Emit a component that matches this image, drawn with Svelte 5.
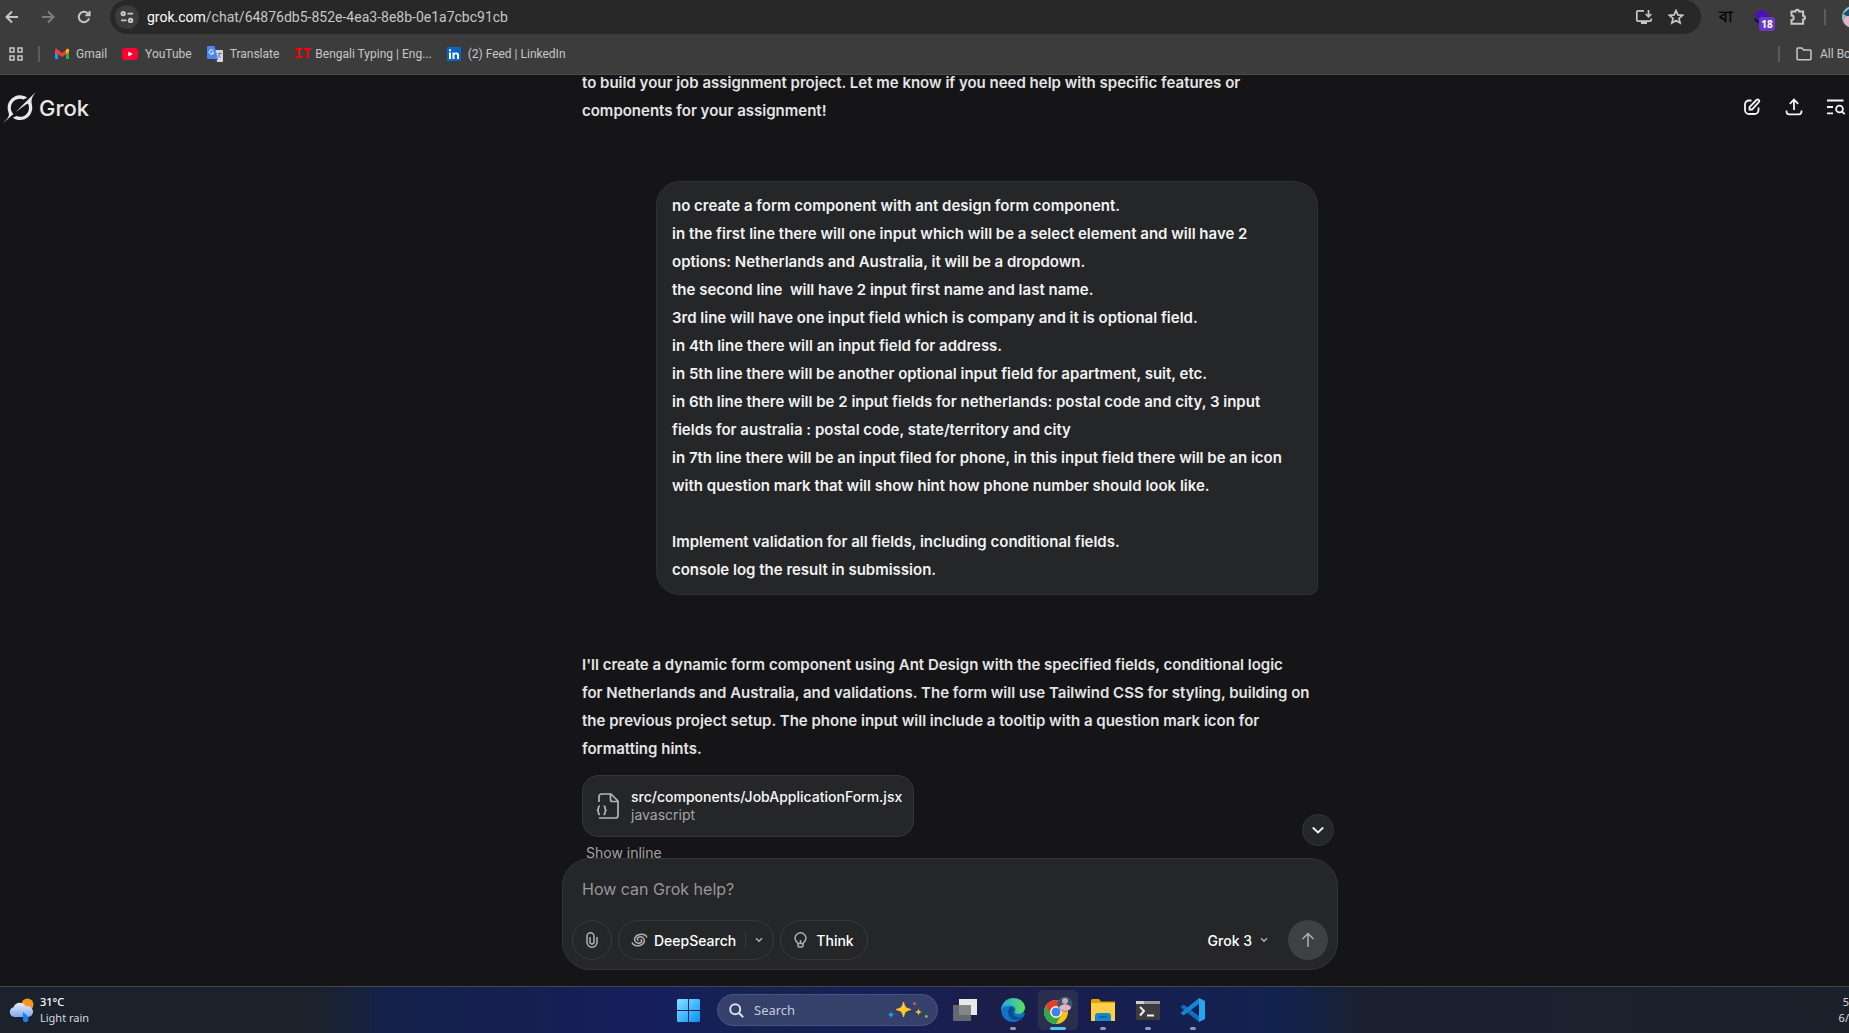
<script>
  const intro = [
    'to build your job assignment project. Let me know if you need help with specific features or',
    'components for your assignment!'
  ].join('\n');

  const request = [
    'no create a form component with ant design form component.',
    'in the first line there will one input which will be a select element and will have 2',
    'options: Netherlands and Australia, it will be a dropdown.',
    'the second line  will have 2 input first name and last name.',
    '3rd line will have one input field which is company and it is optional field.',
    'in 4th line there will an input field for address.',
    'in 5th line there will be another optional input field for apartment, suit, etc.',
    'in 6th line there will be 2 input fields for netherlands: postal code and city, 3 input',
    'fields for australia : postal code, state/territory and city',
    'in 7th line there will be an input filed for phone, in this input field there will be an icon',
    'with question mark that will show hint how phone number should look like.',
    '',
    'Implement validation for all fields, including conditional fields.',
    'console log the result in submission.'
  ].join('\n');

  const answer = [
    "I'll create a dynamic form component using Ant Design with the specified fields, conditional logic",
    'for Netherlands and Australia, and validations. The form will use Tailwind CSS for styling, building on',
    'the previous project setup. The phone input will include a tooltip with a question mark icon for',
    'formatting hints.'
  ].join('\n');

  let prompt = $state('');
</script>

<div class="screen">
  <header class="browser">
    <nav class="toolbar" aria-label="Browser toolbar">
      <div class="history">
        <button aria-label="Back"><svg width="14" height="14" viewBox="0 0 14 14"><path d="M13 7H2M7 1.5 1.5 7 7 12.5" /></svg></button>
        <button class="dim" aria-label="Forward"><svg width="14" height="14" viewBox="0 0 14 14"><path d="M1 7h11M7 1.5 12.5 7 7 12.5" /></svg></button>
        <button aria-label="Reload"><svg width="14" height="14" viewBox="0 0 14 14"><path d="M12 8.3A5.2 5.2 0 1 1 10.8 3.4L12.4 5M12.6 1v4.3H8.4" /></svg></button>
      </div>
      <div class="address">
        <button class="tune" aria-label="Site information">
          <svg width="14" height="14" viewBox="0 0 14 14"><circle cx="3.2" cy="3.6" r="1.7" /><path d="M7.5 3.6H13M1 10.4h5.5" /><circle cx="10.6" cy="10.4" r="1.7" /></svg>
        </button>
        <span class="url"><b>grok.com</b>/chat/64876db5-852e-4ea3-8e8b-0e1a7cbc91cb</span>
        <button aria-label="Install app"><svg width="18" height="16" viewBox="0 0 18 16"><path d="M9 1.8H3A1.2 1.2 0 0 0 1.8 3v8A1.2 1.2 0 0 0 3 12.2h12a1.2 1.2 0 0 0 1.2-1.2V9.5" /><path d="M13.5 1v6.5M10.7 5l2.8 2.8L16.3 5" /><path class="solid" d="M6 12h6v3H6z" /></svg></button>
        <button aria-label="Bookmark this tab"><svg width="16" height="16" viewBox="0 0 16 16"><path d="m8 1.6 1.9 4.3 4.7.4-3.6 3.1 1.1 4.6L8 11.5 3.9 14 5 9.4 1.4 6.3l4.7-.4z" /></svg></button>
      </div>
      <div class="extensions">
        <button class="bengali" lang="bn" aria-label="Bengali keyboard">বা</button>
        <button class="cap" aria-label="Extension with 18 items">
          <svg width="18" height="16" viewBox="0 0 18 16"><path d="m9 0 8 6-8 6-8-6z" /><path d="M1.5 8.5 9 13.5V16L1.5 12z" /></svg>
          <span class="badge">18</span>
        </button>
        <button aria-label="Extensions"><svg width="18" height="18" viewBox="0 0 18 18"><path d="M2.5 3.5h4a1.8 1.8 0 0 1 3.6 0h4v4.2a1.9 1.9 0 0 1 0 3.8v4.2H2.5v-3.8a2.2 2.2 0 0 0 0-4.4z" /></svg></button>
      </div>
      <span class="rule"></span>
      <button class="profile" aria-label="Profile">
        <svg width="22" height="22" viewBox="0 0 22 22"><circle cx="11" cy="11" r="11" /><path d="M1 8 7 3v8z" /><circle cx="7" cy="15" r="5" /></svg>
      </button>
    </nav>

    <nav class="bookmarks" aria-label="Bookmarks">
      <button class="apps" aria-label="Apps"><svg width="14" height="14" viewBox="0 0 14 14"><path d="M1 1h4v4H1zM9 1h4v4H9zM1 9h4v4H1zM9 9h4v4H9z" /></svg></button>
      <span class="rule"></span>
      <a href="#gmail"><svg width="14" height="12" viewBox="0 0 14 12"><path d="M0 2v9h3V5z" fill="#4285f4" /><path d="M14 2v9h-3V5z" fill="#34a853" /><path d="M0 1.5 1.5.5 7 5 12.5.5 14 1.5V4L7 9 0 4z" fill="#ea4335" /><path d="M11 2 12.5.5 14 1.5V4l-3 2z" fill="#fbbc04" /></svg>Gmail</a>
      <a href="#youtube"><svg width="16" height="12" viewBox="0 0 16 12"><rect width="16" height="12" rx="3" fill="#ff0033" /><path d="M6.3 3.4 10.8 6l-4.5 2.6z" fill="#fff" /></svg>YouTube</a>
      <a href="#translate"><svg width="16" height="16" viewBox="0 0 16 16"><path d="M7 4h8a1 1 0 0 1 1 1v10a1 1 0 0 1-1 1h-5z" fill="#d5d8dc" /><path d="M1 0h6.5L11 13H1a1 1 0 0 1-1-1V1a1 1 0 0 1 1-1z" fill="#4a86ee" /><path d="m8 13 3 0-2 3z" fill="#2a56c6" /><path d="M6.3 4.8a2.2 2.2 0 1 0 .3 1.9H4.5" fill="none" stroke="#fff" stroke-width="1" /><path d="M10.5 7.5H15M12.7 6.5v1c0 2-1 3-1.7 3.6m.3-2c.6 1.2 1.5 2 2.7 2.7" fill="none" stroke="#6b7885" stroke-width=".9" /></svg>Translate</a>
      <a href="#bengali-typing"><span class="it">IT</span>Bengali Typing | Eng...</a>
      <a href="#linkedin"><svg width="14" height="14" viewBox="0 0 14 14"><rect width="14" height="14" rx="1" fill="#0a66c2" /><path d="M2 5.5h2V12H2zM2 2.2h2v2H2zM5.5 5.5h1.9v.9c1-1.6 4.6-1.5 4.6 1.6v4h-2V8.6c0-2-2.5-1.8-2.5 0V12h-2z" fill="#fff" /></svg>(2) Feed | LinkedIn</a>
      <span class="push"></span>
      <span class="rule"></span>
      <button class="all"><svg width="16" height="14" viewBox="0 0 16 14"><path d="M1 11.8V2a.9.9 0 0 1 .9-.9h4l1.6 1.8h6.6a.9.9 0 0 1 .9.9v8a.9.9 0 0 1-.9.9H1.900a.9.9 0 0 1-.9-.9z" /></svg><span>All Bookmarks</span></button>
    </nav>
  </header>

  <main class="page">
    <a class="brand" href="#home">
      <svg width="33" height="33" viewBox="0 0 24 24"><path d="M9.27 15.29l7.978-5.897c.391-.29.95-.177 1.137.272.98 2.369.542 5.215-1.41 7.169-1.951 1.954-4.667 2.382-7.149 1.406l-2.711 1.257c3.889 2.661 8.611 2.003 11.562-.953 2.341-2.344 3.066-5.539 2.388-8.42l.006.007c-.983-4.232.242-5.924 2.75-9.383.06-.082.12-.164.179-.248l-3.301 3.305v-.01L9.267 15.292M7.623 16.723c-2.792-2.67-2.31-6.801.071-9.184 1.761-1.763 4.647-2.483 7.166-1.425l2.705-1.25a7.808 7.808 0 00-1.829-1A8.975 8.975 0 005.984 5.83c-2.533 2.536-3.33 6.436-1.962 9.764 1.022 2.487-.653 4.246-2.34 6.022-.599.63-1.199 1.259-1.682 1.925l7.62-6.815" /></svg>
      <span>Grok</span>
    </a>
    <div class="actions">
      <button aria-label="New chat"><svg width="18" height="18" viewBox="0 0 18 18"><path d="M8.5 2.5H6A4 4 0 0 0 2 6.5V12a4 4 0 0 0 4 4h5.5a4 4 0 0 0 4-4V9.5" /><path d="M6.5 11.5V9l7-7a1.5 1.5 0 0 1 2.3 2.2L9 11.5z" /></svg></button>
      <button aria-label="Share"><svg width="18" height="18" viewBox="0 0 18 18"><path d="M9 12V2M4.8 5.8 9 1.6l4.2 4.2M1.5 12.5v1a2.8 2.8 0 0 0 2.8 2.8h9.4a2.8 2.8 0 0 0 2.8-2.8v-1" /></svg></button>
      <button aria-label="Search history"><svg width="18" height="18" viewBox="0 0 18 18"><path d="M0 2.5h16.5M0 9h6M0 15.3h6" /><circle cx="12.5" cy="11" r="3.4" /><path d="m15 13.5 2.7 2.7" /></svg></button>
    </div>

    <section class="thread">
      <p>{intro}</p>
      <p class="bubble">{request}</p>
      <p>{answer}</p>
      <button class="file">
        <svg width="24" height="26" viewBox="0 0 24 26"><path d="M3 9V3.5A2.5 2.5 0 0 1 5.5 1H15l7 7v14.5a2.5 2.5 0 0 1-2.5 2.5H3M14.5 1v5.5A2 2 0 0 0 16.5 8.5H22" /><path d="M4 13c-1.5 0-1.5.5-1.5 2s0 2-1.5 2.2c1.5.2 1.5.8 1.5 2.2s0 2 1.5 2M7.5 13C9 13 9 13.5 9 15s0 2 1.5 2.2C9 17.4 9 18 9 19.4s0 2-1.5 2" /></svg>
        <span><strong>src/components/JobApplicationForm.jsx</strong><small>javascript</small></span>
      </button>
      <button class="inline">Show inline</button>
    </section>

    <form class="composer" onsubmit={(event) => event.preventDefault()}>
      <button type="button" class="latest" aria-label="Scroll to latest"><svg width="14" height="14" viewBox="0 0 14 14"><path d="m1.8 4.5 5.2 5 5.2-5" /></svg></button>
      <input type="text" aria-label="Message" placeholder="How can Grok help?" bind:value={prompt} />
      <div class="controls">
        <button type="button" class="pill round" aria-label="Attach"><svg width="12" height="16" viewBox="0 0 12 16"><path d="M8.500 5v5a2.500 2.500 0 0 1-5 0V3.500a2.700 2.700 0 0 1 5.400 0M11 5.500V10a5 5 0 0 1-10 0V5.500" stroke="none" /><path d="M11 5v5.200a4.800 4.800 0 0 1-10 0V4.200a3.500 3.500 0 0 1 7 0v5.900a2 2 0 0 1-4 0V5" /></svg></button>
        <div class="pill split">
          <button type="button"><svg width="17" height="14" viewBox="0 0 17 14"><path d="M1 9.5C2 12.5 6 13.5 9.5 12.3 13 11 14 8 13 6 12 4 9.5 3.5 7.5 4.3 5.7 5 6 7 7.5 7.5" /><path d="M16 4.5C15 1.5 11 .5 7.5 1.7 4 3 3 6 4 8c1 2 3.5 2.5 5.5 1.7C11.3 9 11 7 9.5 6.5" /></svg>DeepSearch</button>
          <button type="button" class="more" aria-label="DeepSearch options"><svg width="8" height="8" viewBox="0 0 8 8"><path d="m1 2.3 3 3 3-3" /></svg></button>
        </div>
        <button type="button" class="pill think"><svg width="13" height="16" viewBox="0 0 13 16"><path d="M4 11.5C2.5 10 1 8.6 1 6.3a5.5 5.5 0 0 1 11 0c0 2.3-1.5 3.7-3 5.2zM4 11.5v2.2c0 .8.6 1.3 1.3 1.3h2.4c.7 0 1.3-.5 1.3-1.3v-2.2M6.5 11.5V8" /></svg>Think</button>
        <span class="push"></span>
        <button type="button" class="model">Grok 3<svg width="8" height="8" viewBox="0 0 8 8"><path d="m1 2.3 3 3 3-3" /></svg></button>
        <button class="send" aria-label="Send"><svg width="14" height="16" viewBox="0 0 14 16"><path d="M7 15V1.5M1.5 7 7 1.5 12.5 7" /></svg></button>
      </div>
    </form>
  </main>

  <footer class="taskbar">
    <button class="weather">
      <svg width="25" height="25" viewBox="0 0 25 25"><defs><linearGradient id="cloud" x2="0" y2="1"><stop stop-color="#e6effb" /><stop offset="1" stop-color="#7fa9ea" /></linearGradient></defs><circle cx="18.5" cy="6.5" r="6" fill="#f7941d" /><path d="M5.5 19a5 5 0 0 1-1-9.8C6 4 14 3 16.5 8c4.5-.5 7.5 2.5 7.5 5.5s-2 5.5-5.5 5.5z" fill="url(#cloud)" /><path d="M14 14c4 3 5.5 5 5.5 7.5a2.900 2.900 0 0 1-5.5 1z" fill="#1d7df2" /></svg>
      <span><b>31°C</b><br />Light rain</span>
    </button>
    <div class="dock">
      <button class="start" aria-label="Start"><svg width="23" height="23" viewBox="0 0 23 23"><defs><linearGradient id="win" x2="1" y2="1"><stop stop-color="#83e4ff" /><stop offset="1" stop-color="#0a8ff5" /></linearGradient></defs><path d="M1 0h10v11H0V1zM12 0h10l1 1v10H12zM0 12h11v11H1l-1-1zM12 12h11v10l-1 1H12z" fill="url(#win)" /></svg></button>
      <button class="search">
        <svg class="lens" width="15" height="15" viewBox="0 0 15 15"><circle cx="6.2" cy="6.2" r="5" /><path d="m10 10 4.2 4.2" /></svg>
        <span>Search</span>
        <svg width="40" height="18" viewBox="0 0 40 18"><path d="M15.5 1c1 5 2.5 6.5 7.5 7.5-5 1-6.5 2.5-7.5 7.5-1-5-2.5-6.5-7.5-7.5 5-1 6.5-2.5 7.5-7.5z" fill="#ffc928" stroke="#ffc928" /><path d="M30.5 7.5c.6 2.4 1.1 2.9 3.5 3.5-2.4.6-2.9 1.1-3.5 3.5-.6-2.4-1.1-2.9-3.5-3.5 2.4-.6 2.9-1.1 3.5-3.5z" fill="#ffc928" /><path d="m3 10.5 1 2.3 2 1-2 1-1 2.2-1-2.2-2-1 2-1z" fill="#19a7ee" /><circle cx="26.5" cy="2.5" r="1.5" fill="#e2593a" /><circle cx="38.3" cy="15.5" r="1.4" fill="#7fbf4a" /></svg>
      </button>
      <button class="views" aria-label="Task view"><svg width="24" height="24" viewBox="0 0 24 24"><path d="M6 1h18v16H6z" fill="#e9e9ea" /><path d="M0 7h18v16H0z" fill="#737477" fill-opacity=".85" /></svg></button>
      <button class="open" aria-label="Edge"><svg width="24" height="24" viewBox="0 0 24 24"><defs><linearGradient id="edge"><stop stop-color="#1fa5e8" /><stop offset="1" stop-color="#5be35a" /></linearGradient></defs><path d="M24 15.5c-1.5 5-6.5 8.5-12 8.5A12 12 0 0 1 0 12c0-4 4-7 9-6.5z" fill="#1073c6" /><path d="M0 12C.5 5 5.5 0 12 0c7 0 12 4.5 12 9.5 0 4-3 6.3-6.5 6.3-2.5 0-4-.8-3.5-2 1.5-3-.5-6-4-6C5.5 7.5 1 9 0 12z" fill="url(#edge)" /><path d="M9.5 9C6.5 11 6 16.5 9.5 20c4 3.5 9 2 12.5-1.5-4.5 2-9 0-10-4-.5-2 1.5-1.5 1-3.5-.5-1.5-2-3-3.5-2z" fill="#0c4a96" /></svg></button>
      <button class="open active" aria-label="Chrome"><svg width="30" height="28" viewBox="0 0 30 28"><circle cx="13" cy="16" r="12" fill="#fbc116" /><path d="M2.6 10A12 12 0 0 1 23.4 10H13a6 6 0 0 0-5.2 9z" fill="#e33b2e" /><path d="M2.6 10A12 12 0 0 0 13 28l5.2-9a6 6 0 0 1-10.4 0z" fill="#2da94f" /><circle cx="13" cy="16" r="5.7" fill="#fff" /><circle cx="13" cy="16" r="4.5" fill="#3b82f0" /><circle cx="22" cy="8" r="7.5" fill="#345866" /><circle cx="22" cy="5" r="3" fill="#c9a9bd" /><path d="M16 12c1-5 11-5 12 0a7.5 7.5 0 0 1-12 0z" fill="#e2b3c6" /></svg></button>
      <button class="open" aria-label="File Explorer"><svg width="24" height="22" viewBox="0 0 24 22"><path d="M0 1.5A1.5 1.5 0 0 1 1.5 0H8l2 2.5h14V8H0z" fill="#e8a200" /><path d="M0 4h24v18H0z" fill="#ffd047" /><path d="M4 22v-5a3 3 0 0 1 3-3h10a3 3 0 0 1 3 3v5z" fill="#1586d1" /><path d="M8 18h8" stroke="#0b5a9a" stroke-width="1.5" /></svg></button>
      <button class="open" aria-label="Terminal"><svg width="24" height="19" viewBox="0 0 24 19"><rect width="24" height="19" rx="1" fill="#3c3c3e" /><path d="M0 0h24v3H0z" fill="#98999c" /><path d="M0 0h8v3H0z" fill="#d0d1d3" /><path d="m4 6 4 4-4 4.5M11 14.5h7" fill="none" stroke="#f1f1f1" stroke-width="2" /></svg></button>
      <button class="open" aria-label="Visual Studio Code"><svg width="24" height="24" viewBox="0 0 24 24"><path d="M0 8.5 2.5 6.5 18 18v6L0 9.5z" fill="#0f6fb8" /><path d="M0 15.5 2.5 17.5 18 6V0L0 14.5z" fill="#1484cf" /><path d="m18 0 6 3v18l-6 3z" fill="#29a3ee" /></svg></button>
    </div>
    <div class="clock">5<br />6/</div>
  </footer>
</div>

<style>
  :global(body) { background: #151517; }
  .screen {
    display: flex; flex-direction: column; height: 100vh; overflow: hidden;
    background: #151517; color: #f2f2f2; font-family: Inter, sans-serif; font-size: 16px;
  }
  button, input { font: inherit; color: inherit; background: none; border: 0; padding: 0; margin: 0; }
  button { display: flex; align-items: center; justify-content: center; flex: none; cursor: pointer; }
  a { color: inherit; text-decoration: none; }
  svg { flex: none; display: block; }
  .push { flex: 1; }

  .browser { background: #3c3c3c; border-bottom: 1px solid #4a4a4a; color: #c7c7c7; font-family: Roboto, sans-serif; flex: none; }
  .browser button > svg path, .browser button > svg circle { stroke: #c7c7c7; stroke-width: 2; fill: none; }
  .browser button.dim > svg path { stroke: #7c7c7c; }
  .browser .rule { width: 2px; height: 16px; background: #5c5c5c; flex: none; }
  .toolbar { display: flex; align-items: center; height: 34px; overflow: hidden; }
  .history { display: flex; gap: 12px; margin-right: 14px; }
  .history button, .extensions button { width: 24px; height: 24px; }
  .address {
    flex: 1; display: flex; align-items: center; gap: 12px; height: 34px;
    padding: 0 15px 0 5px; border-radius: 17px; background: #282828;
  }
  .address button { width: 20px; height: 20px; }
  .browser .address button > svg path { stroke-width: 1.7; }
  .browser .address button > svg path.solid { fill: #c7c7c7; stroke: none; }
  .address .tune { width: 24px; height: 24px; border-radius: 12px; background: #3c3c3c; margin-right: -4px; }
  .url { flex: 1; font-size: 14px; color: #c7c7c7; white-space: nowrap; }
  .url b { font-weight: 400; color: #fff; }
  .extensions { display: flex; gap: 12px; padding: 0 14px 0 13px; }
  .extensions .bengali { color: #050505; font-size: 16px; font-weight: 700; }
  .extensions .cap { position: relative; }
  .browser .extensions .cap > svg path { stroke: none; }
  .browser .extensions .cap > svg path:first-child { fill: #4a12b8; }
  .browser .extensions .cap > svg path:last-child { fill: #1c0a66; }
  .badge {
    position: absolute; left: 9px; top: 12px; width: 16px; height: 14px; border-radius: 3px;
    background: #6b38c4; color: #fff; font: 700 10px/14px "Open Sans", sans-serif;
  }
  .profile { width: 7px; margin-left: 16px; justify-content: flex-start; overflow: hidden; }
  .browser .profile > svg circle, .browser .profile > svg path { stroke: none; fill: #8fb7c6; }
  .browser .profile > svg path { fill: #1e4f64; }
  .browser .profile > svg circle:last-child { fill: #e5b3c4; }

  .bookmarks { display: flex; align-items: center; height: 40px; font-size: 12px; overflow: hidden; white-space: nowrap; padding-left: 9px; }
  .bookmarks .apps { margin-right: 15px; }
  .browser .bookmarks button > svg path { stroke-width: 1.5; }
  .bookmarks a { display: flex; align-items: center; gap: 7px; margin-left: 15px; }
  .it { color: #f00; font: 700 14px/14px "Liberation Mono", monospace; width: 14px; }
  .all { gap: 8px; margin-left: 16px; }
  .all span { width: 29px; text-align: left; }

  .page { flex: 1; min-height: 0; display: flex; flex-direction: column; position: relative; padding-left: 51px; }
  .brand { position: absolute; left: 3px; top: 16px; display: flex; align-items: center; gap: 3px; font-size: 22px; line-height: 32px; font-weight: 500; color: #e8e8e8; }
  .brand svg { fill: #e8e8e8; }
  .actions { position: absolute; right: 4px; top: 23px; display: flex; gap: 24px; }
  .actions svg, .file svg, .composer svg { fill: none; stroke: #f4f4f4; stroke-width: 1.8; }

  .thread {
    flex: 1; min-height: 0; width: 736px; margin: 0 auto; overflow: hidden;
    display: flex; flex-direction: column; justify-content: flex-end; align-items: flex-start;
  }
  .thread p { margin: 0 0 56px; font-size: 15px; line-height: 28px; font-weight: 600; white-space: pre; color: #e4e4e4; flex: none; }
  .thread p.bubble {
    align-self: flex-end; width: 630px; padding: 10px 15px; color: #f2f2f2;
    background: #242628; border: 1px solid #2f3133; border-radius: 24px 24px 8px 24px;
  }
  .thread .bubble + p { margin-bottom: 12px; }
  .file { gap: 11px; width: 332px; height: 62px; padding: 0 13px; justify-content: flex-start; background: #242628; border: 1px solid #333537; border-radius: 16px; text-align: left; }
  .file svg { stroke: #b5b5b5; stroke-width: 1.7; }
  .file strong, .file small { display: block; font-size: 14px; line-height: 18px; }
  .file strong { font-weight: 500; color: #f8f8f8; }
  .file small { color: #a6a6a6; font-weight: 400; }
  .inline { margin: 6px 4px -5px; font-size: 14px; line-height: 20px; color: #a3a3a3; }

  .composer {
    position: relative; width: 776px; box-sizing: border-box; margin: 0 auto 16px; flex: none;
    padding: 10px 9px 9px; background: #242628; border: 1px solid #333537; border-radius: 28px;
  }
  .composer input { display: block; box-sizing: border-box; width: 100%; height: 40px; padding: 0 10px; outline: 0; }
  .composer input::placeholder { color: #989898; opacity: 1; }
  .latest { position: absolute; right: 3px; top: -45px; width: 32px; height: 32px; border-radius: 16px; background: #242628; border: 1px solid #333537; }
  .controls { display: flex; align-items: center; gap: 6px; margin-top: 11px; font-size: 14px; font-weight: 500; color: #fff; }
  .pill { height: 40px; box-sizing: border-box; border: 1px solid #37393b; border-radius: 20px; }
  .controls svg { stroke: #b0b0b0; stroke-width: 1.5; }
  .round { width: 40px; }
  .split { display: flex; width: 156px; }
  .split button { gap: 6px; padding: 0 9px 0 12px; }
  .split .more { flex: 1; position: relative; padding: 0; }
  .more::before { content: ""; position: absolute; left: 0; top: 11px; height: 16px; border-left: 1px solid #37393b; }
  .think { gap: 9px; width: 88px; }
  .model { gap: 8px; margin-right: 14px; }
  .send { width: 40px; height: 40px; border-radius: 20px; background: #3f4044; }

  .taskbar {
    flex: none; height: 46px; border-top: 1px solid #45464c; display: grid; grid-template-columns: 1fr auto 1fr; align-items: center;
    font-family: "Noto Sans", sans-serif; font-size: 11px; color: #d8dae0;
    background: linear-gradient(90deg, #1b222c 0 17%, #14214a 21%, #161f56 32%, #161f5e 36%, #14234f 41%, #171f5a 48%, #1b1e48 54%, #171f50 60%, #12224f 69%, #1a202e 74%, #1b212b);
  }
  .weather { gap: 6px; justify-self: start; padding-left: 9px; line-height: 16px; text-align: left; }
  .weather b { font-weight: 500; color: #fff; }
  .dock { display: flex; align-items: center; gap: 5px; height: 46px; padding-left: 41px; }
  .dock > button { width: 40px; height: 40px; position: relative; }
  .dock > .start { width: 23px; margin-right: 12px; }
  .dock > .search {
    width: 221px; height: 32px; padding: 0 9px 0 11px; gap: 10px; margin-right: 2px; border-radius: 16px; box-sizing: border-box;
    background: #35406b; border: 1px solid #4a5580; font-size: 13px; color: #c4cbdd;
  }
  .dock > .views { margin-right: 3px; }
  .search span { flex: 1; text-align: left; }
  .lens { fill: none; stroke: #d9deea; stroke-width: 2; }
  .dock > .active { border-radius: 5px; background: #2a2f50; }
  .open::after { content: ""; position: absolute; left: 17px; bottom: 0; width: 6px; height: 3px; border-radius: 2px; background: #9499ad; }
  .active.open::after { left: 12px; width: 16px; background: #4cc2ff; }
  .clock { justify-self: end; line-height: 16px; text-align: right; }
</style>
